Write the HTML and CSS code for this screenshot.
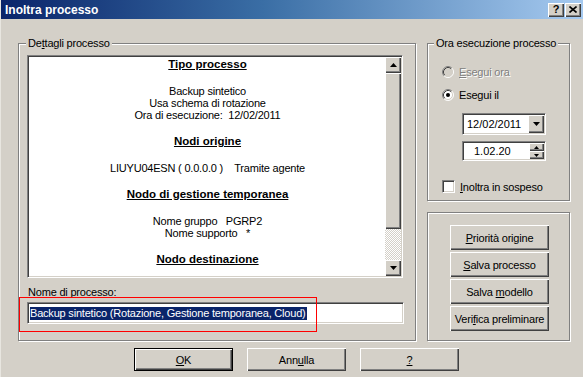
FILE: index.html
```html
<!DOCTYPE html>
<html lang="it">
<head>
<meta charset="utf-8">
<title>Inoltra processo</title>
<link rel="stylesheet" href="styles.css">
</head>
<body>
<div class="window">
  <div class="titlebar">
    <span class="title">Inoltra processo</span>
    <div class="caption-btns">
      <span class="cap-btn raised">?</span>
      <span class="cap-btn raised"><svg width="8" height="7" viewBox="0 0 8 7"><path d="M0.5 0.5L7.5 6.5M7.5 0.5L0.5 6.5" stroke="#000" stroke-width="1.6" fill="none"/></svg></span>
    </div>
  </div>
  <div class="client">
    <div class="main">
      <div class="group group-details">
        <span class="group-title">De<u>t</u>tagli processo</span>
        <div class="listbox sunken">
          <div class="list-content">
            <div class="hdr">Tipo processo</div>
            <div class="lines">
              <div class="ln">Backup sintetico</div>
              <div class="ln">Usa schema di rotazione</div>
              <div class="ln">Ora di esecuzione:  12/02/2011</div>
            </div>
            <div class="hdr">Nodi origine</div>
            <div class="lines">
              <div class="ln">LIUYU04ESN ( 0.0.0.0 )    Tramite agente</div>
            </div>
            <div class="hdr">Nodo di gestione temporanea</div>
            <div class="lines">
              <div class="ln">Nome gruppo   PGRP2</div>
              <div class="ln">Nome supporto   *</div>
            </div>
            <div class="hdr">Nodo destinazione</div>
          </div>
          <div class="scrollbar">
            <div class="sb-btn raised"><svg width="7" height="4" viewBox="0 0 7 4"><path d="M0 4H7L3.5 0Z"/></svg></div>
            <div class="sb-thumb raised"></div>
            <div class="sb-track"></div>
            <div class="sb-btn raised"><svg width="7" height="4" viewBox="0 0 7 4"><path d="M0 0H7L3.5 4Z"/></svg></div>
          </div>
        </div>
        <label class="field-label"><u>N</u>ome di processo:</label>
        <div class="textbox sunken"><span class="sel">Backup sintetico (Rotazione, Gestione temporanea, Cloud)</span></div>
      </div>
      <div class="side">
        <div class="group group-time">
          <span class="group-title title-right">Ora esecuzione processo</span>
          <div class="opt-row first disabled">
            <svg class="radio" width="12" height="12" viewBox="0 0 12 12">
              <circle cx="6" cy="6" r="5" fill="#d4d0c8"/>
              <path d="M2.11 9.89A5.5 5.5 0 0 1 9.89 2.11" stroke="#808080" fill="none"/>
              <path d="M2.82 9.18A4.5 4.5 0 0 1 9.18 2.82" stroke="#404040" fill="none"/>
              <path d="M9.89 2.11A5.5 5.5 0 0 1 2.11 9.89" stroke="#ffffff" fill="none"/>
              <path d="M9.18 2.82A4.5 4.5 0 0 1 2.82 9.18" stroke="#d4d0c8" fill="none"/>
            </svg>
            <span class="opt-label"><u>E</u>segui ora</span>
          </div>
          <div class="opt-row second">
            <svg class="radio" width="12" height="12" viewBox="0 0 12 12">
              <circle cx="6" cy="6" r="5" fill="#ffffff"/>
              <path d="M2.11 9.89A5.5 5.5 0 0 1 9.89 2.11" stroke="#808080" fill="none"/>
              <path d="M2.82 9.18A4.5 4.5 0 0 1 9.18 2.82" stroke="#404040" fill="none"/>
              <path d="M9.89 2.11A5.5 5.5 0 0 1 2.11 9.89" stroke="#ffffff" fill="none"/>
              <path d="M9.18 2.82A4.5 4.5 0 0 1 2.82 9.18" stroke="#d4d0c8" fill="none"/>
              <circle cx="6" cy="6" r="2" fill="#000"/>
            </svg>
            <span class="opt-label">Esegui il</span>
          </div>
          <div class="combo sunken">
            <span class="field-text">12/02/2011</span>
            <span class="combo-btn raised"><svg width="7" height="4" viewBox="0 0 7 4"><path d="M0 0H7L3.5 4Z"/></svg></span>
          </div>
          <div class="spin sunken">
            <span class="field-text spin-text">1.02.20</span>
            <span class="spin-btns">
              <span class="spin-btn raised"><svg width="5" height="3" viewBox="0 0 5 3"><path d="M0 3H5L2.5 0Z"/></svg></span>
              <span class="spin-btn raised"><svg width="5" height="3" viewBox="0 0 5 3"><path d="M0 0H5L2.5 3Z"/></svg></span>
            </span>
          </div>
          <div class="opt-row check-row">
            <span class="checkbox sunken"></span>
            <span class="opt-label"><u>I</u>noltra in sospeso</span>
          </div>
        </div>
        <div class="group group-actions">
          <button class="btn raised action"><span><u>P</u>riorità origine</span></button>
          <button class="btn raised action"><span><u>S</u>alva processo</span></button>
          <button class="btn raised action"><span>Salva <u>m</u>odello</span></button>
          <button class="btn raised action"><span>Veri<u>f</u>ica preliminare</span></button>
        </div>
      </div>
    </div>
    <div class="footer">
      <button class="btn raised footer-btn default"><span><u>O</u>K</span></button>
      <button class="btn raised footer-btn"><span>Ann<u>u</u>lla</span></button>
      <button class="btn raised footer-btn"><span><u>?</u></span></button>
    </div>
  </div>
  <div class="annot"></div>
</div>
</body>
</html>
```
FILE: styles.css
```css
* { box-sizing: border-box; }
html, body { margin: 0; padding: 0; }
body {
  width: 583px;
  height: 377px;
  overflow: hidden;
  background: #d4d0c8;
  font-family: "Liberation Sans", Arial, sans-serif;
  font-size: 11px;
  color: #000;
}
u { text-decoration: underline; text-underline-offset: 1px; }

.window {
  position: relative;
  width: 583px;
  height: 377px;
  background: #d4d0c8;
  border-left: 1px solid #e8e6e0;
}

.raised {
  background: #d4d0c8;
  box-shadow: inset 1px 1px 0 #ffffff, inset -1px -1px 0 #404040, inset -2px -2px 0 #808080;
}
.sunken {
  border: 1px solid;
  border-color: #808080 #ffffff #ffffff #808080;
  box-shadow: inset 1px 1px 0 #404040, inset -1px -1px 0 #d4d0c8;
  background: #ffffff;
}

/* title bar */
.titlebar {
  height: 19px;
  background: linear-gradient(to right, #0a246a, #3a6ea5 45%, #a6caf0);
  display: flex;
  align-items: center;
  justify-content: space-between;
  padding: 0 2px 0 4px;
}
.title {
  color: #fff;
  font-weight: bold;
  font-size: 12px;
}
.caption-btns { display: flex; gap: 1px; }
.cap-btn {
  width: 16px;
  height: 14px;
  display: flex;
  align-items: center;
  justify-content: center;
  font-weight: bold;
  font-size: 11px;
  line-height: 14px;
  padding-bottom: 1px;
}

/* client */
.client { padding: 24px 0 0 17px; letter-spacing: -0.2px; }
.main { display: flex; gap: 11px; }

.group {
  border: 1px solid #808080;
  box-shadow: inset 1px 1px 0 #ffffff, 1px 1px 0 #ffffff;
}
.group-title {
  display: block;
  width: max-content;
  margin: -7px 0 0 7px;
  padding: 0 2px;
  background: #d4d0c8;
  line-height: 13px;
}
.title-right { margin-left: 6px; }

.group-details {
  width: 398px;
  height: 298px;
}

.listbox {
  margin: 5px 0 0 8px;
  width: 376px;
  height: 223px;
  padding: 1px;
  display: flex;
}
.list-content {
  flex: 1;
  overflow: hidden;
  text-align: center;
  padding-left: 1px;
}
.ln { white-space: pre; }
.hdr {
  font-weight: bold;
  font-size: 11.5px;
  line-height: 14px;
  letter-spacing: 0;
  text-decoration: underline;
  text-underline-offset: 1px;
  margin-bottom: 14px;
}
.lines { line-height: 12px; margin-bottom: 13px; }

.scrollbar {
  width: 16px;
  display: flex;
  flex-direction: column;
}
.sb-btn {
  height: 16px;
  display: flex;
  align-items: center;
  justify-content: center;
}
.sb-thumb { height: 156px; }
.sb-track {
  flex: 1;
  background: repeating-conic-gradient(#d4d0c8 0 25%, #ffffff 0 50%) 0 0 / 2px 2px;
}

.field-label {
  display: block;
  margin: 8px 0 0 9px;
  line-height: 13px;
}
.textbox {
  margin: 3px 0 0 8px;
  width: 377px;
  height: 22px;
  padding: 4px 2px 0;
}
.sel {
  display: inline-block;
  background: #0a246a;
  color: #fff;
  line-height: 13px;
  padding-right: 1px;
}

/* right side */
.side {
  width: 143px;
  display: flex;
  flex-direction: column;
  gap: 11px;
}
.group-time { height: 158px; }
.opt-row {
  display: flex;
  align-items: center;
  gap: 5px;
  height: 13px;
  margin: 10px 0 0 14px;
}
.opt-row.first { margin-top: 15px; }
.radio { display: block; flex: none; }
.disabled .opt-label {
  color: #808080;
  text-shadow: 1px 1px 0 #ffffff;
}
.combo, .spin {
  margin: 12px 0 0 34px;
  width: 84px;
  height: 22px;
  display: flex;
  align-items: stretch;
  padding: 1px;
}
.spin { margin-top: 6px; height: 20px; }
.field-text {
  flex: 1;
  padding-left: 3px;
  display: flex;
  align-items: center;
  letter-spacing: 0;
}
.spin-text { padding-left: 10px; }
.combo-btn {
  width: 16px;
  display: flex;
  align-items: center;
  justify-content: center;
}
.spin-btns {
  width: 15px;
  display: flex;
  flex-direction: column;
}
.spin-btn {
  flex: 1;
  display: flex;
  align-items: center;
  justify-content: center;
}
.check-row { margin-top: 19px; }
.checkbox {
  width: 13px;
  height: 13px;
  flex: none;
}

.group-actions {
  height: 129px;
  padding: 12px 0 0 22px;
  display: flex;
  flex-direction: column;
  gap: 2px;
}
.btn {
  border: 0;
  margin: 0;
  font: inherit;
  letter-spacing: -0.2px;
  color: #000;
  padding: 0;
  display: flex;
  align-items: center;
  justify-content: center;
}
.btn span { white-space: pre; }
.action { width: 99px; height: 25px; }

.footer {
  display: flex;
  gap: 14px;
  margin-top: 7px;
  padding-left: 116px;
}
.footer-btn { width: 99px; height: 23px; }
.default {
  border: 1px solid #000;
}

/* annotation overlay */
.annot {
  position: absolute;
  left: 18px;
  top: 297px;
  width: 298px;
  height: 35px;
  border: 1px solid #ff0000;
  pointer-events: none;
}
```
